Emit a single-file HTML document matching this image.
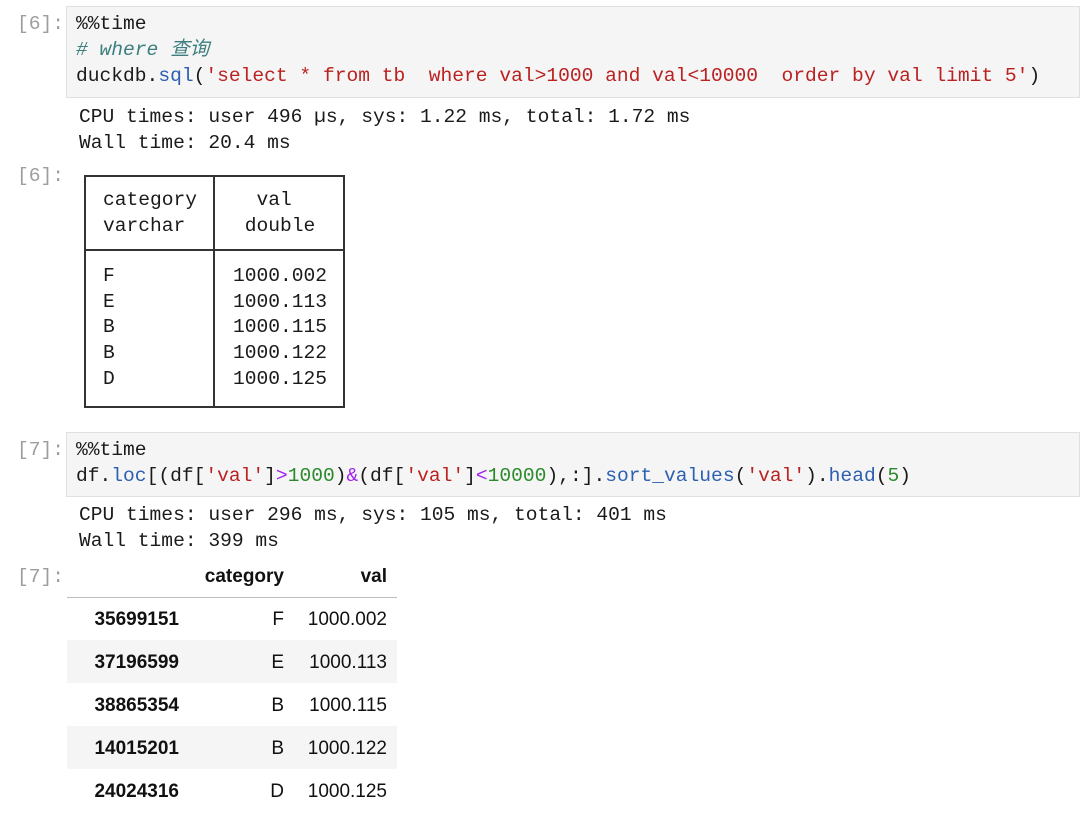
<!DOCTYPE html>
<html><head><meta charset="utf-8"><style>
body{margin:0;width:1080px;height:824px;background:#fff;position:relative;overflow:hidden}
.m{font-family:"Liberation Mono","Noto Sans CJK SC",monospace;font-size:19.6px;white-space:pre;position:absolute;line-height:26px;color:#1a1a1a}
.p{color:#9e9e9e}
.cell{position:absolute;left:66px;right:0;background:#f5f5f5;border:1px solid #e0e0e0}
.c{color:#3d7f7f;font-style:italic}
.s{color:#ba2121}.f{color:#2c5fb0}.n{color:#2b8a2b}.o{color:#a020f0}
.t{position:absolute;font-family:"Liberation Sans",sans-serif;font-size:19px;color:#111;line-height:43px}
.b{font-weight:bold}
.r{text-align:right}
</style></head><body>
<div class="cell" style="top:6px;height:90px"></div>
<div class="m p" style="left:17px;top:11px">[6]:</div>
<div class="m" style="left:76px;top:11px">%%time
<span class="c"># where 查询</span>
duckdb.<span class="f">sql</span>(<span class="s">'select * from tb  where val&gt;1000 and val&lt;10000  order by val limit 5'</span>)</div>
<div class="m" style="left:79px;top:104px">CPU times: user 496 µs, sys: 1.22 ms, total: 1.72 ms
Wall time: 20.4 ms</div>
<div class="m p" style="left:17px;top:163px">[6]:</div>
<div style="position:absolute;left:84px;top:175px;width:257px;height:229px;border:2px solid #333"></div>
<div style="position:absolute;left:213px;top:175px;width:2px;height:231px;background:#333"></div>
<div style="position:absolute;left:84px;top:249px;width:259px;height:2px;background:#333"></div>
<div class="m" style="left:103px;top:187px">category
varchar</div>
<div class="m" style="left:233px;top:187px">  val
 double</div>
<div class="m" style="left:103px;top:264px;line-height:25.7px">F
E
B
B
D</div>
<div class="m" style="left:233px;top:264px;line-height:25.7px">1000.002
1000.113
1000.115
1000.122
1000.125</div>
<div class="cell" style="top:432px;height:63px"></div>
<div class="m p" style="left:17px;top:437px">[7]:</div>
<div class="m" style="left:76px;top:437px">%%time
df.<span class="f">loc</span>[(df[<span class="s">'val'</span>]<span class="o">&gt;</span><span class="n">1000</span>)<span class="o">&amp;</span>(df[<span class="s">'val'</span>]<span class="o">&lt;</span><span class="n">10000</span>),:].<span class="f">sort_values</span>(<span class="s">'val'</span>).<span class="f">head</span>(<span class="n">5</span>)</div>
<div class="m" style="left:79px;top:502px">CPU times: user 296 ms, sys: 105 ms, total: 401 ms
Wall time: 399 ms</div>
<div class="m p" style="left:17px;top:564px">[7]:</div>
<div class="t b r" style="left:180px;width:104px;top:555px">category</div>
<div class="t b r" style="left:290px;width:97px;top:555px">val</div>
<div style="position:absolute;left:67px;width:330px;top:597px;height:1px;background:#bdbdbd"></div>
<div style="position:absolute;left:67px;width:330px;top:640px;height:43px;background:#f5f5f5"></div>
<div style="position:absolute;left:67px;width:330px;top:726px;height:43px;background:#f5f5f5"></div>
<div class="t b r" style="left:67px;width:112px;top:598px">35699151<br>37196599<br>38865354<br>14015201<br>24024316</div>
<div class="t r" style="left:240px;width:44px;top:598px">F<br>E<br>B<br>B<br>D</div>
<div class="t r" style="left:290px;width:97px;top:598px">1000.002<br>1000.113<br>1000.115<br>1000.122<br>1000.125</div>
</body></html>
